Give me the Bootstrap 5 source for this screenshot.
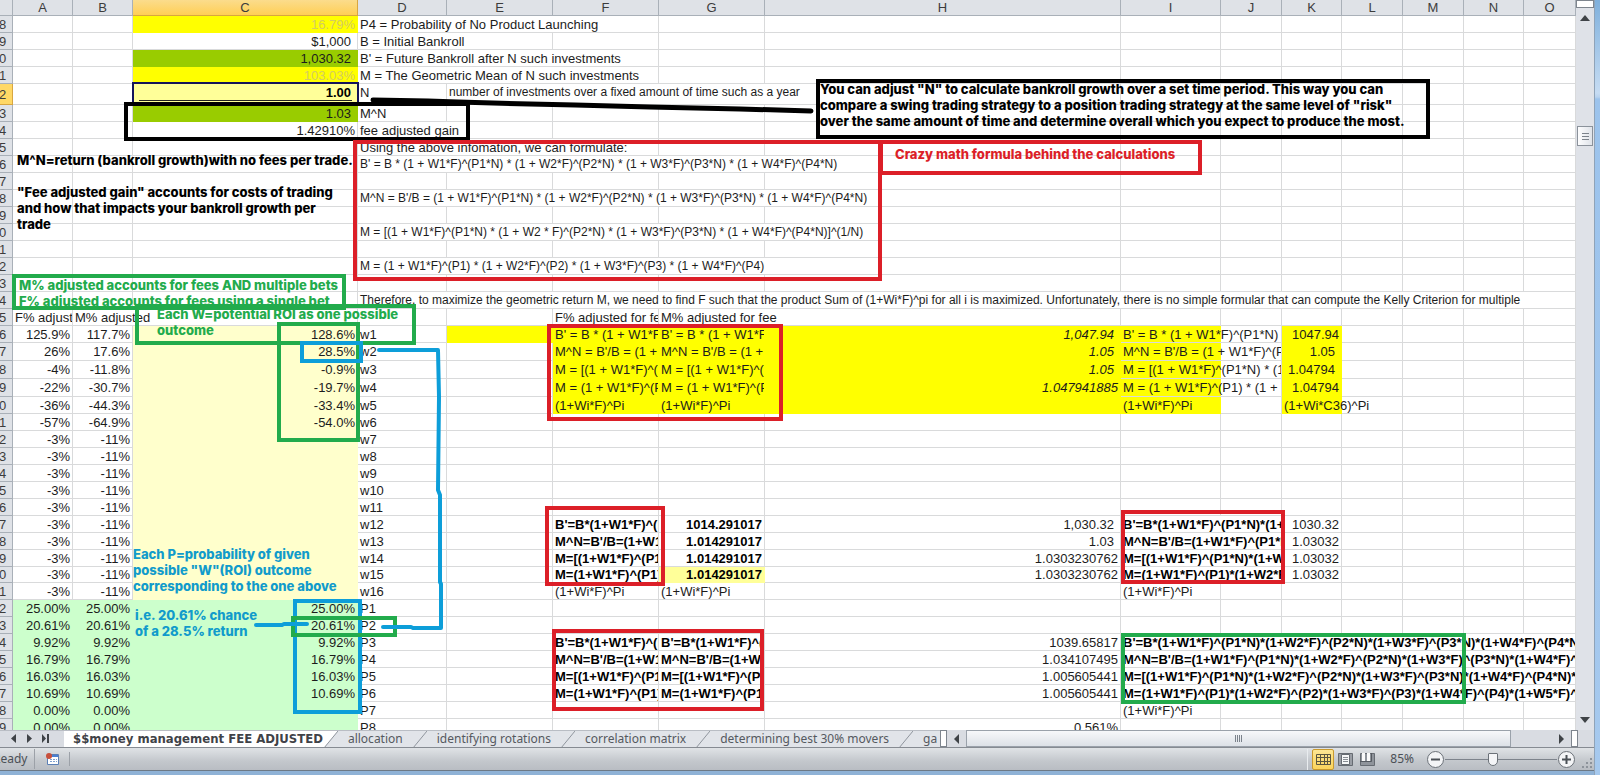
<!DOCTYPE html>
<html lang="en">
<head>
<meta charset="utf-8">
<meta name="viewport" content="width=device-width, initial-scale=1">
<title>Money management workbook</title>
<link href="https://cdn.jsdelivr.net/npm/bootstrap@5.3.0/dist/css/bootstrap.min.css" rel="stylesheet">
<style>
  body { font: 13px/15px "Liberation Sans", Arial, sans-serif; color: #1c1c1c; background: #9fc3e8; }
  button { border: 0; background: none; padding: 0; color: inherit; }

  /* grid */
  .book { border-right: 1px solid #8fa3b8; min-width: 0; }
  .sheet { background: #fff; min-width: 0; }
  .grid { table-layout: fixed; width: 100%; border-collapse: separate; border-spacing: 0; }
  .grid th { font-weight: 400; color: #3c3c3c; background: #dfe2e7; padding: 0; text-align: center; border: solid #a9b0b8; border-width: 0 1px 1px 0; overflow: hidden; }
  .grid thead th { height: 16px; }
  .grid tbody th { text-align: left; text-indent: -1px; }
  .grid thead th.picked { background: linear-gradient(#fbdc8c, #ffcf55); border-color: #d8a640; }
  .grid tbody th.picked { background: #ffd866; border-color: #d8a640; }
  .grid td { height: 17px; padding: 0 2px; white-space: nowrap; border: solid #d9dadb; border-width: 0 1px 1px 0; }
  .grid .h16 td { height: 16px; }
  .grid .h18 td { height: 18px; }
  .grid .h21 td { height: 21px; vertical-align: top; padding-top: 1px; }
  .grid td.num { text-align: right; }
  .grid td.acc { text-align: right; padding-right: 6px; }
  .grid td.cut { overflow: hidden; }
  .grid td.txt { font-size: 12px; }
  .grid td.bold { font-weight: 700; color: #000; }
  .grid td.ital { font-style: italic; }
  .grid td.pale { color: #d4cc60; }
  .grid td.fill { border-color: transparent; }
  .yellow { background: #ff0; }
  .lime { background: #9c0; }
  .cream { background: #ffc; }
  .mint { background: #cfc; }
  .straw { background: #ff9; }
  .grid td.half { background: linear-gradient(#ff0, #ff0) left / 100px 100% no-repeat; }

  /* notes drawn on top of the grid */
  .frame { position: absolute; border: 4px solid; }
  .note { position: absolute; font: 800 13px/16px Inter, "Liberation Sans", sans-serif; white-space: nowrap; margin: 0; }
  .k { color: #000; } .r { color: #dc1f28; } .g { color: #22ab4c; } .b { color: #0d9ed9; }
  .note.b { color: #119bcb; }
  .cursor { position: absolute; border: 2px solid #14145a; }
  .cursor::after { content: ""; position: absolute; left: 5px; right: 5px; bottom: 2px; border-bottom: 1px solid #222; }

  /* scroll bars */
  .vbar { width: 18px; background: #dfe2e8; }
  .knob { border: 1px solid #8b929b; background: linear-gradient(90deg, #fdfdfe, #dfe3e9); }
  .split { height: 8px; border: 1px solid #7e858e; background: #fff; }
  .vgap { height: 98px; }
  .edge { width: 5px; background: linear-gradient(#7fb0dc, #c6dcf3 12%, #b9d3ef 97px, #9cc3ec 99px, #a6c9ee); }

  /* tab strip */
  .strip { height: 18px; background: #d9dce2; border-bottom: 1px solid #868b92; font: 12px/13px "Noto Sans", sans-serif; color: #55595f; }
  .tabs { width: 59%; border-top: 1px solid #b9bdc4; }
  .sheet-tab { background: #e1e4e9; padding: 0 10px 2px; white-space: nowrap; height: 17px; }
  .sheet-tab.on { background: #fff; color: #3f4247; font-family: "DejaVu Sans Condensed", "Noto Sans", sans-serif; font-size: 13px; font-weight: 700; padding: 0 1px 2px 9px; }
  .navs { width: 64px; padding-left: 10px; }
  .hthumb { width: 93%; border: 1px solid #9aa1aa; background: linear-gradient(#f7f8fa, #dde1e7); }
  .grip { border: 1px solid #7e858e; background: #fff; width: 7px; }

  /* status bar */
  .status { height: 23px; background: linear-gradient(#e0e3e6, #c3c7cc 60%, #b9bdc3); border-bottom: 1px solid #6d7986; font: 12px/20px "Noto Sans", sans-serif; color: #4b5056; }
  .ready { width: 35px; overflow: hidden; border-right: 1px solid #9ca1a8; }
  .ready span { margin-left: -7px; }
  .macro { width: 35px; border-right: 1px solid #9ca1a8; }
  .view { width: 22px; height: 21px; }
  .view.on { background: linear-gradient(#fde693, #fbd45c); border: 1px solid #c99a2e; border-radius: 2px; }
  .zoom { width: 112px; height: 18px; appearance: none; background: linear-gradient(#7e848c, #7e848c) center / 100% 1px no-repeat; }
  .zoom::-webkit-slider-thumb { appearance: none; width: 10px; height: 13px; border: 1px solid #6b7178; background: #f4f5f7; border-radius: 1px 1px 5px 5px; }
  .lip { height: 4px; background: #8fb2d6; }
</style>
</head>
<body class="vh-100 d-flex overflow-hidden">
<div class="book d-flex flex-column flex-fill overflow-hidden">
  <main class="d-flex flex-grow-1 overflow-hidden">
    <div class="sheet flex-grow-1 position-relative overflow-hidden">
      <table class="grid">
        <colgroup id="cols"></colgroup>
        <thead><tr id="heads"></tr></thead>
        <tbody id="cells"></tbody>
      </table>

      <div id="frames"></div>
      <svg class="position-absolute top-0 start-0 pe-none" width="1576" height="729" fill="none" stroke-width="4" stroke-linecap="round" stroke-linejoin="round" aria-hidden="true">
        <path stroke="#000" stroke-width="5" d="M373 100l55 1 30 1 72 2 45 1 75 2 90 2 71 2"/>
        <path stroke="#0d9ed9" d="M379 350h59l1 47-1 93 2 5v87l1 2v44h-28l-2-1h-28M256 625h26l2-1h23"/>
      </svg>

      <p class="note k" style="left:17px;top:152px">M^N=return (bankroll growth)with no fees per trade.</p>
      <p class="note k" style="left:17px;top:184px">"Fee adjusted gain" accounts for costs of trading<br>and how that impacts your bankroll growth per<br>trade</p>
      <p class="note k" style="left:820px;top:81px">You can adjust "N" to calculate bankroll growth over a set time period. This way you can<br>compare a swing trading strategy to a position trading strategy at the same level of "risk"<br>over the same amount of time and determine overall which you expect to produce the most.</p>
      <p class="note r" style="left:895px;top:146px">Crazy math formula behind the calculations</p>
      <p class="note g" style="left:19px;top:277px">M% adjusted accounts for fees AND multiple bets<br>F% adjusted accounts for fees using a single bet</p>
      <p class="note g" style="left:157px;top:306px">Each W=potential ROI as one possible<br>outcome</p>
      <p class="note b" style="left:133px;top:546px">Each P=probability of given<br>possible "W"(ROI) outcome<br>corresponding to the one above</p>
      <p class="note b" style="left:135px;top:607px">i.e. 20.61% chance<br>of a 28.5% return</p>
    </div>

    <div class="vbar d-flex flex-column flex-shrink-0 align-items-center">
      <div class="split w-100"></div>
      <button class="d-flex py-1" aria-label="Scroll up"><svg width="10" height="12"><path d="M0 9l5-6 5 6z" fill="#3f4347"/></svg></button>
      <div class="vgap"></div>
      <div class="knob"><svg class="d-block" width="14" height="18" stroke="#7b828b"><path d="M4 6.500h7M4 9.500h7M4 12.500h7"/></svg></div>
      <button class="d-flex mt-auto pb-1" aria-label="Scroll down"><svg width="10" height="12"><path d="M0 3l5 6 5-6z" fill="#3f4347"/></svg></button>
    </div>
  </main>

  <div class="strip d-flex">
    <nav class="tabs d-flex flex-shrink-0 overflow-hidden" aria-label="Sheets">
      <div class="navs d-flex flex-shrink-0 align-items-center gap-2">
        <button class="d-flex" aria-label="Previous sheet"><svg width="8" height="10"><path d="M6 0v9L1 4.500z" fill="#3f4347"/></svg></button>
        <button class="d-flex" aria-label="Next sheet"><svg width="8" height="10"><path d="M1 0v9l5-4.500z" fill="#3f4347"/></svg></button>
        <button class="d-flex" aria-label="Last sheet"><svg width="8" height="10"><path d="M0 0v9l4-4.500zM5 0h2v9H5z" fill="#3f4347"/></svg></button>
      </div>
      <button class="sheet-tab on">$$money management FEE ADJUSTED</button>
      <svg class="flex-shrink-0" width="14" height="17"><path d="M0 0h14L0 17z" fill="#fff"/><path d="M14 0L0 17h14z" fill="#e1e4e9"/><path d="M14 0L0 17" stroke="#8f959d"/></svg>
      <button class="sheet-tab">allocation</button>
      <svg class="flex-shrink-0" width="14" height="17"><path d="M0 0h14v17H0z" fill="#e1e4e9"/><path d="M14 0L0 17" stroke="#8f959d"/></svg>
      <button class="sheet-tab">identifying rotations</button>
      <svg class="flex-shrink-0" width="14" height="17"><path d="M0 0h14v17H0z" fill="#e1e4e9"/><path d="M14 0L0 17" stroke="#8f959d"/></svg>
      <button class="sheet-tab">correlation matrix</button>
      <svg class="flex-shrink-0" width="14" height="17"><path d="M0 0h14v17H0z" fill="#e1e4e9"/><path d="M14 0L0 17" stroke="#8f959d"/></svg>
      <button class="sheet-tab">determining best 30% movers</button>
      <svg class="flex-shrink-0" width="14" height="17"><path d="M0 0h14v17H0z" fill="#e1e4e9"/><path d="M14 0L0 17" stroke="#8f959d"/></svg>
      <button class="sheet-tab flex-grow-1 text-start pe-0">ga</button>
    </nav>
    <div class="grip"></div>
    <div class="d-flex flex-grow-1 align-items-center">
      <button class="d-flex px-1" aria-label="Scroll left"><svg width="11" height="10"><path d="M8 0v10L3 5z" fill="#3f4347"/></svg></button>
      <div class="flex-grow-1 h-100"><div class="hthumb h-100 d-flex align-items-center justify-content-center"><svg width="8" height="7" stroke="#7b828b"><path d="M.5 0v7M2.500 0v7M4.500 0v7M6.500 0v7"/></svg></div></div>
      <button class="d-flex px-1" aria-label="Scroll right"><svg width="11" height="10"><path d="M3 0v10l5-5z" fill="#3f4347"/></svg></button>
    </div>
    <div class="grip me-3"></div>
  </div>

  <footer class="status d-flex align-items-center">
    <div class="ready"><span>Ready</span></div>
    <div class="macro d-flex justify-content-center">
      <button class="d-flex" aria-label="Record macro"><svg width="15" height="14"><path d="M2.500 2.500h11v10h-11z" fill="#fff" stroke="#5a7fb5"/><path d="M3 3h10v2H3z" fill="#4b7fd0"/><path d="M5 7h2v1H5zM8 7h2v1H8zM11 7h1v1h-1zM5 9h2v1H5zM8 9h2v1H8zM11 9h1v1h-1z" fill="#7fa0cf"/><circle cx="4" cy="4" r="3" fill="#c8503c"/></svg></button>
    </div>
    <div class="d-flex align-items-center ms-auto border-start border-secondary-subtle ps-1">
      <button class="view on d-flex align-items-center justify-content-center" aria-label="Normal view"><svg width="15" height="13" fill="none" stroke="#5b5640"><path d="M.5 1.500h14v10H.500zM.5 4.500h14M.5 8.500h14M4.500 1v11M8.500 1v11M11.500 1v11"/></svg></button>
      <button class="view d-flex align-items-center justify-content-center" aria-label="Page layout"><svg width="15" height="13"><path d="M.5.500h14v12H.500z" fill="#9a9ea5" stroke="#666b72"/><path d="M3.500 1.500h8v10h-8z" fill="#f6f7f8" stroke="#666b72"/><path d="M5 4.500h5M5 6.500h5M5 8.500h5" stroke="#888d94"/></svg></button>
      <button class="view d-flex align-items-center justify-content-center" aria-label="Page break preview"><svg width="15" height="13"><path d="M.5.500h14v12H.500z" fill="#8f949b" stroke="#666b72"/><path d="M2 0h3v8H2zM7 0h3v8H7z" fill="#fafafa"/><path d="M11.500 0v8.500H0" fill="none" stroke="#555a61"/></svg></button>
      <label for="zoom" class="ps-2 pe-2 ms-1">85%</label>
      <button class="d-flex ms-1" aria-label="Zoom out"><svg width="19" height="19"><circle cx="9.500" cy="9.500" r="8" fill="#f3f4f6" stroke="#6b7178"/><path d="M5 9.500h9" stroke="#4b5056" stroke-width="2"/></svg></button>
      <input id="zoom" class="zoom" type="range" min="0" max="100" value="42">
      <button class="d-flex" aria-label="Zoom in"><svg width="19" height="19"><circle cx="9.500" cy="9.500" r="8" fill="#f3f4f6" stroke="#6b7178"/><path d="M5 9.500h9M9.500 5v9" stroke="#4b5056" stroke-width="2"/></svg></button>
      <svg class="align-self-end" width="18" height="14" fill="#8d939b"><path d="M14 2h2v2h-2zM10 6h2v2h-2zM14 6h2v2h-2zM6 10h2v2H6zM10 10h2v2h-2zM14 10h2v2h-2z"/></svg>
    </div>
  </footer>
  <div class="lip"></div>
</div>
<div class="edge flex-shrink-0"></div>

<script>
  // Column widths; the last column takes what is left.
  const widths = [13, 60, 60, 225, 89, 106, 106, 106, 356, 100, 61, 60, 61, 61, 60, null];
  document.getElementById('cols').innerHTML = widths.map(w => w ? `<col style="width:${w}px">` : '<col>').join('');
  document.getElementById('heads').innerHTML = '<th></th>' + [...'ABCDEFGHIJKLMNO'].map(c => `<th scope="col"${c === 'C' ? ' class="picked"' : ''}>${c}</th>`).join('');

  // A row is [label, height class, {column: [text, classes, span]}].
  const long4 = {
    B: "B'=B*(1+W1*F)^(P1*N)*(1+W2*F)^(P2*N)*(1+W3*F)^(P3*N)*(1+W4*F)^(P4*N)*(1+W5*F)",
    N: "M^N=B'/B=(1+W1*F)^(P1*N)*(1+W2*F)^(P2*N)*(1+W3*F)^(P3*N)*(1+W4*F)^(P4*N)",
    G: "M=[(1+W1*F)^(P1*N)*(1+W2*F)^(P2*N)*(1+W3*F)^(P3*N)*(1+W4*F)^(P4*N)*(1+W5*F)",
    M: "M=(1+W1*F)^(P1)*(1+W2*F)^(P2)*(1+W3*F)^(P3)*(1+W4*F)^(P4)*(1+W5*F)^(P5)"
  };
  const rows = [
    ['8', '', {C: ['16.79%', 'num yellow fill pale'], D: ['P4 = Probability of No Product Launching', '', 3]}],
    ['9', '', {C: ['$1,000', 'acc'], D: ['B = Initial Bankroll', '', 2]}],
    ['0', '', {C: ['1,030.32', 'acc lime fill'], D: ["B' = Future Bankroll after N such investments", '', 3]}],
    ['1', '', {C: ['103.03%', 'num yellow fill pale'], D: ['M = The Geometric Mean of N such investments', '', 3]}],
    ['2', 'h21', {C: ['1.00', 'acc straw fill bold'], D: ['N'], E: ['number of investments over a fixed amount of time such as a year', 'txt', 4]}],
    ['3', '', {C: ['1.03', 'acc lime fill'], D: ['M^N']}],
    ['4', '', {C: ['1.42910%', 'num'], D: ['fee adjusted gain', '', 2]}],
    ['5', '', {D: ['Using the above infomation, we can formulate:', '', 3]}],
    ['6', '', {D: ["B' = B * (1 + W1*F)^(P1*N) * (1 + W2*F)^(P2*N) * (1 + W3*F)^(P3*N) * (1 + W4*F)^(P4*N)", 'txt', 5]}],
    ['7', '', {}],
    ['8', '', {D: ["M^N = B'/B = (1 + W1*F)^(P1*N) * (1 + W2*F)^(P2*N) * (1 + W3*F)^(P3*N) * (1 + W4*F)^(P4*N)", 'txt', 5]}],
    ['9', '', {}],
    ['0', '', {D: ['M = [(1 + W1*F)^(P1*N) * (1 + W2 * F)^(P2*N) * (1 + W3*F)^(P3*N) * (1 + W4*F)^(P4*N)]^(1/N)', 'txt', 5]}],
    ['1', '', {}],
    ['2', '', {D: ['M = (1 + W1*F)^(P1) * (1 + W2*F)^(P2) * (1 + W3*F)^(P3) * (1 + W4*F)^(P4)', 'txt', 5]}],
    ['3', '', {}],
    ['4', '', {D: ['Therefore, to maximize the geometric return M, we need to find F such that the product Sum of (1+Wi*F)^pi for all i is maximized. Unfortunately, there is no simple formular that can compute the Kelly Criterion for multiple', 'txt', 12]}],
    ['5', '', {A: ['F% adjusted', 'cut'], B: ['M% adjusted', '', 2], F: ['F% adjusted for fee', 'cut'], G: ['M% adjusted for fee', '', 2]}]
  ];
  const adj = [['125.9%', '117.7%', '128.6%'], ['26%', '17.6%', '28.5%'], ['-4%', '-11.8%', '-0.9%'], ['-22%', '-30.7%', '-19.7%'], ['-36%', '-44.3%', '-33.4%'], ['-57%', '-64.9%', '-54.0%']];
  const spaced = [
    "B' = B * (1 + W1*F)^(P1*N) * (1 + W2",
    "M^N = B'/B = (1 + W1*F)^(P1*N)",
    'M = [(1 + W1*F)^(P1*N) * (1 + W2',
    'M = (1 + W1*F)^(P1) * (1 + W2*F)'
  ];
  const hVals = ['1,047.94', '1.05', '1.05', '1.047941885'], kVals = ['1047.94', '1.05', '1.04794', '1.04794'];
  const order = ['B', 'N', 'G', 'M'];
  for (let i = 0; i < 16; i++) {
    const a = adj[i] || ['-3%', '-11%', ''];
    const c = {A: [a[0], 'num'], B: [a[1], 'num'], C: [a[2], 'num cream fill'], D: ['w' + (i + 1)]};
    if (i === 0) c.E = ['', 'yellow fill'];
    if (i < 4) {
      c.F = c.G = [spaced[i], 'cut yellow fill'];
      c.H = [hVals[i], (i < 3 ? 'acc' : 'num') + ' ital yellow fill'];
      c.I = [spaced[i], 'cut half', 2];
      c.K = [kVals[i], (i % 3 ? 'acc' : 'num') + ' yellow fill'];
    }
    if (i === 4) {
      c.F = c.G = c.I = ['(1+Wi*F)^Pi', 'yellow fill'];
      c.H = ['', 'yellow fill'];
      c.K = ['(1+Wi*C36)^Pi', 'yellow fill'];
    }
    if (i >= 11 && i < 15) {
      const f = long4[order[i - 11]];
      c.F = [f, 'cut bold'];
      c.G = [i === 11 ? '1014.291017' : '1.014291017', 'num bold' + (i === 14 ? ' straw fill' : '')];
      c.H = [['1,030.32', '1.03', '1.0303230762', '1.0303230762'][i - 11], i < 13 ? 'acc' : 'num'];
      c.I = [f, 'cut bold', 2];
      c.K = [i === 11 ? '1030.32' : '1.03032', 'num'];
    }
    if (i === 15) c.F = c.G = c.I = ['(1+Wi*F)^Pi'];
    rows.push([String((i + 6) % 10), i > 0 && i < 4 ? 'h18' : i === 14 ? 'h16' : '', c]);
  }
  const probs = ['25.00%', '20.61%', '9.92%', '16.79%', '16.03%', '10.69%'];
  for (let i = 0; i < 8; i++) {
    const p = probs[i] || '0.00%';
    const c = {A: [p, 'num mint fill'], B: [p, 'num mint fill'], C: [probs[i] || '', 'num mint fill'], D: ['P' + (i + 1)]};
    if (i > 1 && i < 6) {
      const f = long4[order[i - 2]];
      c.F = c.G = [f, 'cut bold'];
      c.H = [['1039.65817', '1.034107495', '1.005605441', '1.005605441'][i - 2], 'num'];
      c.I = [f, 'cut bold', 7];
    }
    if (i === 6) c.I = ['(1+Wi*F)^Pi'];
    if (i === 7) c.H = ['0.561%', 'num'];
    rows.push([String((i + 2) % 10), '', c]);
  }
  document.getElementById('cells').innerHTML = rows.map(([label, height, c], n) => {
    let html = `<tr class="${height}"><th scope="row"${n === 4 ? ' class="picked"' : ''}>${label}</th>`;
    for (let k = 0; k < 15;) {
      const [text = '', cls = '', span = 1] = c['ABCDEFGHIJKLMNO'[k]] || [];
      html += `<td class="${cls}" colspan="${span}">${text}</td>`;
      k += span;
    }
    return html + '</tr>';
  }).join('');

  // Frames around cell ranges: colour, left, top, right, bottom.
  document.getElementById('frames').innerHTML = [
    ['cursor', 132, 82, 359, 105],
    ['frame k', 124, 102, 470, 141], ['frame k', 816, 79, 1430, 139],
    ['frame r', 353, 140, 882, 281], ['frame r', 879, 140, 1202, 175],
    ['frame g', 12, 274, 346, 310], ['frame g', 135, 304, 416, 345], ['frame g', 277, 322, 360, 442],
    ['frame b', 300, 341, 363, 363], ['frame b', 293, 599, 362, 714], ['frame g', 291, 616, 397, 637],
    ['frame r', 547, 324, 783, 421], ['frame r', 545, 506, 665, 586], ['frame r', 552, 629, 764, 711],
    ['frame r', 1121, 510, 1285, 584], ['frame g', 1121, 633, 1466, 704]
  ].map(([cls, l, t, r, b]) => `<div class="${cls}" style="left:${l}px;top:${t}px;width:${r - l}px;height:${b - t}px"></div>`).join('');
</script>
<script src="https://cdn.jsdelivr.net/npm/bootstrap@5.3.0/dist/js/bootstrap.bundle.min.js"></script>
</body>
</html>
